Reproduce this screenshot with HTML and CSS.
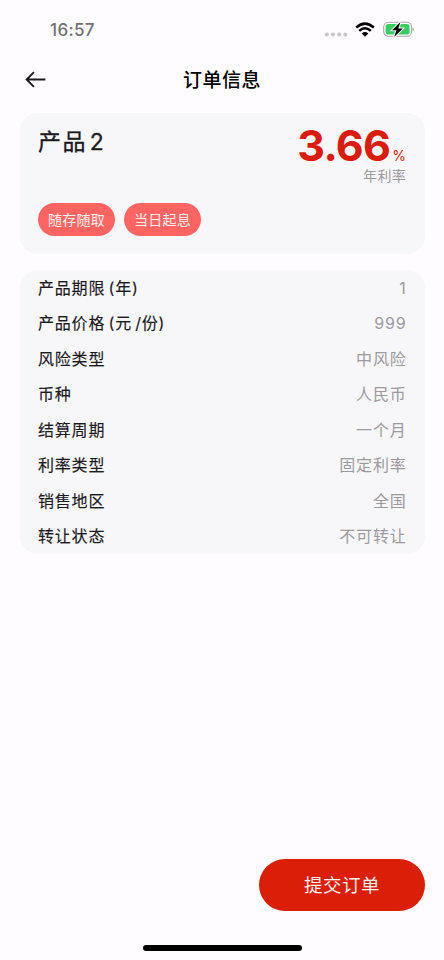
FILE: index.html
```html
<!DOCTYPE html>
<html lang="zh-CN">
<head>
<meta charset="utf-8">
<title>订单信息</title>
<link rel="stylesheet" href="styles.css">
</head>
<body>
<div class="screen">
  <div class="status">
    <span class="time">16:57</span>
    <div class="indicators">
      <svg class="signal" width="24" height="18" viewBox="0 0 24 18"><g fill="#c6c5c9"><circle cx="2.8" cy="13.6" r="2"/><circle cx="9" cy="13.6" r="2"/><circle cx="15.2" cy="13.6" r="2"/><circle cx="21.3" cy="13.6" r="2"/></g></svg>
      <svg class="wifi" width="20" height="16" viewBox="0 0 20 16"><g fill="none" stroke="#000" stroke-width="2.5"><path d="M1.2 5.5Q10-2.3 18.8 5.5"/><path d="M4.2 8.9Q10 3.7 15.8 8.9"/></g><path d="M6.7 11.5Q10 8.7 13.3 11.5L10 14.7Z"/></svg>
      <svg class="battery" width="32" height="18" viewBox="0 0 32 18"><rect x=".7" y="2.3" width="27.8" height="14" rx="4.6" fill="#fefcfe" stroke="#aaa7ac" stroke-width="1.1"/><rect x="2.6" y="4.1" width="24" height="10.4" rx="2.8" fill="#39cd61"/><path d="M29.6 7.3Q31 7.8 31 9.3T29.6 11.3Z" fill="#aaa7ac"/><path d="M17.4 1.9 9 10.3H13.4L11.2 17 19.8 8.5H15.3Z" fill="#000" stroke="#fefcfe" stroke-width="2" paint-order="stroke"/></svg>
    </div>
  </div>
  <header class="nav">
    <svg class="back" width="22" height="18" viewBox="0 0 22 18"><path d="M20.4 8.5H1.6M9 1.1 1.6 8.5 9 15.9" fill="none" stroke="#1b1a1d" stroke-width="1.9"/></svg>
    <h1>订单信息</h1>
  </header>
  <main>
    <section class="card product">
      <div class="summary">
        <h2>产品 2</h2>
        <div class="rate">
          <div class="figure"><strong>3.66</strong><span>%</span></div>
          <div class="caption">年利率</div>
        </div>
      </div>
      <div class="tags"><span>随存随取</span><span>当日起息</span></div>
    </section>
    <dl class="card details">
      <div><dt>产品期限 (年)</dt><dd>1</dd></div>
      <div><dt>产品价格 (元 /份)</dt><dd>999</dd></div>
      <div><dt>风险类型</dt><dd>中风险</dd></div>
      <div><dt>币种</dt><dd>人民币</dd></div>
      <div><dt>结算周期</dt><dd>一个月</dd></div>
      <div><dt>利率类型</dt><dd>固定利率</dd></div>
      <div><dt>销售地区</dt><dd>全国</dd></div>
      <div><dt>转让状态</dt><dd>不可转让</dd></div>
    </dl>
  </main>
  <footer>
    <button class="submit">提交订单</button>
    <div class="home"></div>
  </footer>
</div>
</body>
</html>
```
FILE: styles.css
```css
* { box-sizing: border-box; }
body { margin: 0; background: #fefcfe; color: #1b1a1d; font-family: Inter, "Noto Sans CJK SC", sans-serif; }
h1, h2, dl, dt, dd { margin: 0; font-weight: 500; }
.screen { width: 444px; height: 960px; display: flex; flex-direction: column; overflow: hidden; }
.status { height: 57px; display: flex; justify-content: space-between; padding: 20px 29px 0 50px; }
.time { font-size: 17px; line-height: 21px; font-weight: 500; letter-spacing: .35px; color: #727075; }
.indicators { display: flex; }
.signal { margin: 1px 7px 0 0; }
.wifi { margin: 2px 8px 0 0; }
.nav { height: 44px; display: grid; grid-template-columns: 60px 1fr 60px; align-items: center; }
.back { margin-left: 25px; }
h1 { font-size: 19px; line-height: 44px; padding-top: 2px; letter-spacing: .5px; text-align: center; color: #000; }
main { padding: 12px 19px 0 20px; }
.card { background: #f7f6f9; border-radius: 18px; }
.product { height: 141px; padding: 12px 19px 18px 18px; display: flex; flex-direction: column; justify-content: space-between; }
.summary { display: flex; justify-content: space-between; }
h2 { font-size: 23px; line-height: 34px; letter-spacing: 1.4px; word-spacing: -5px; font-weight: 400; -webkit-text-stroke: .3px #1b1a1d; }
.rate { text-align: right; }
.figure { display: flex; align-items: baseline; justify-content: flex-end; height: 42px; line-height: 40px; color: #db1b0c; }
.figure strong { font-size: 43px; font-weight: 700; letter-spacing: -.7px; }
.figure span { font-size: 14px; margin-left: 2px; }
.caption { font-size: 14px; line-height: 18px; color: #9d9a9e; letter-spacing: .3px; }
.tags { display: flex; gap: 9px; }
.tags span { width: 77px; height: 33px; line-height: 33px; border-radius: 17px; background: #fe6562; color: #fff0ee; text-align: center; font-size: 14px; letter-spacing: .3px; }
.details { margin-top: 16px; height: 284px; padding: 0 19px 0 18px; display: grid; grid-template-rows: repeat(8, 1fr); }
.details div { display: flex; justify-content: space-between; align-items: center; line-height: 24px; font-size: 16px; letter-spacing: .8px; }
dt { font-weight: 400; word-spacing: -2px; -webkit-text-stroke: .15px #1b1a1d; }
dd { color: #9d9a9e; font-weight: 400; margin-right: -.5px; }
footer { margin-top: auto; padding: 0 19px 9px 20px; display: flex; flex-direction: column; }
.submit { align-self: flex-end; width: 166px; height: 52px; border: 0; border-radius: 26px; background: #db1e08; color: #fff3ef; font: 400 18.5px/52px Inter, "Noto Sans CJK SC", sans-serif; letter-spacing: .5px; padding: 0; }
.home { width: 159px; height: 6px; border-radius: 3px; background: #000; margin: 34px 0 0 123px; }
```
